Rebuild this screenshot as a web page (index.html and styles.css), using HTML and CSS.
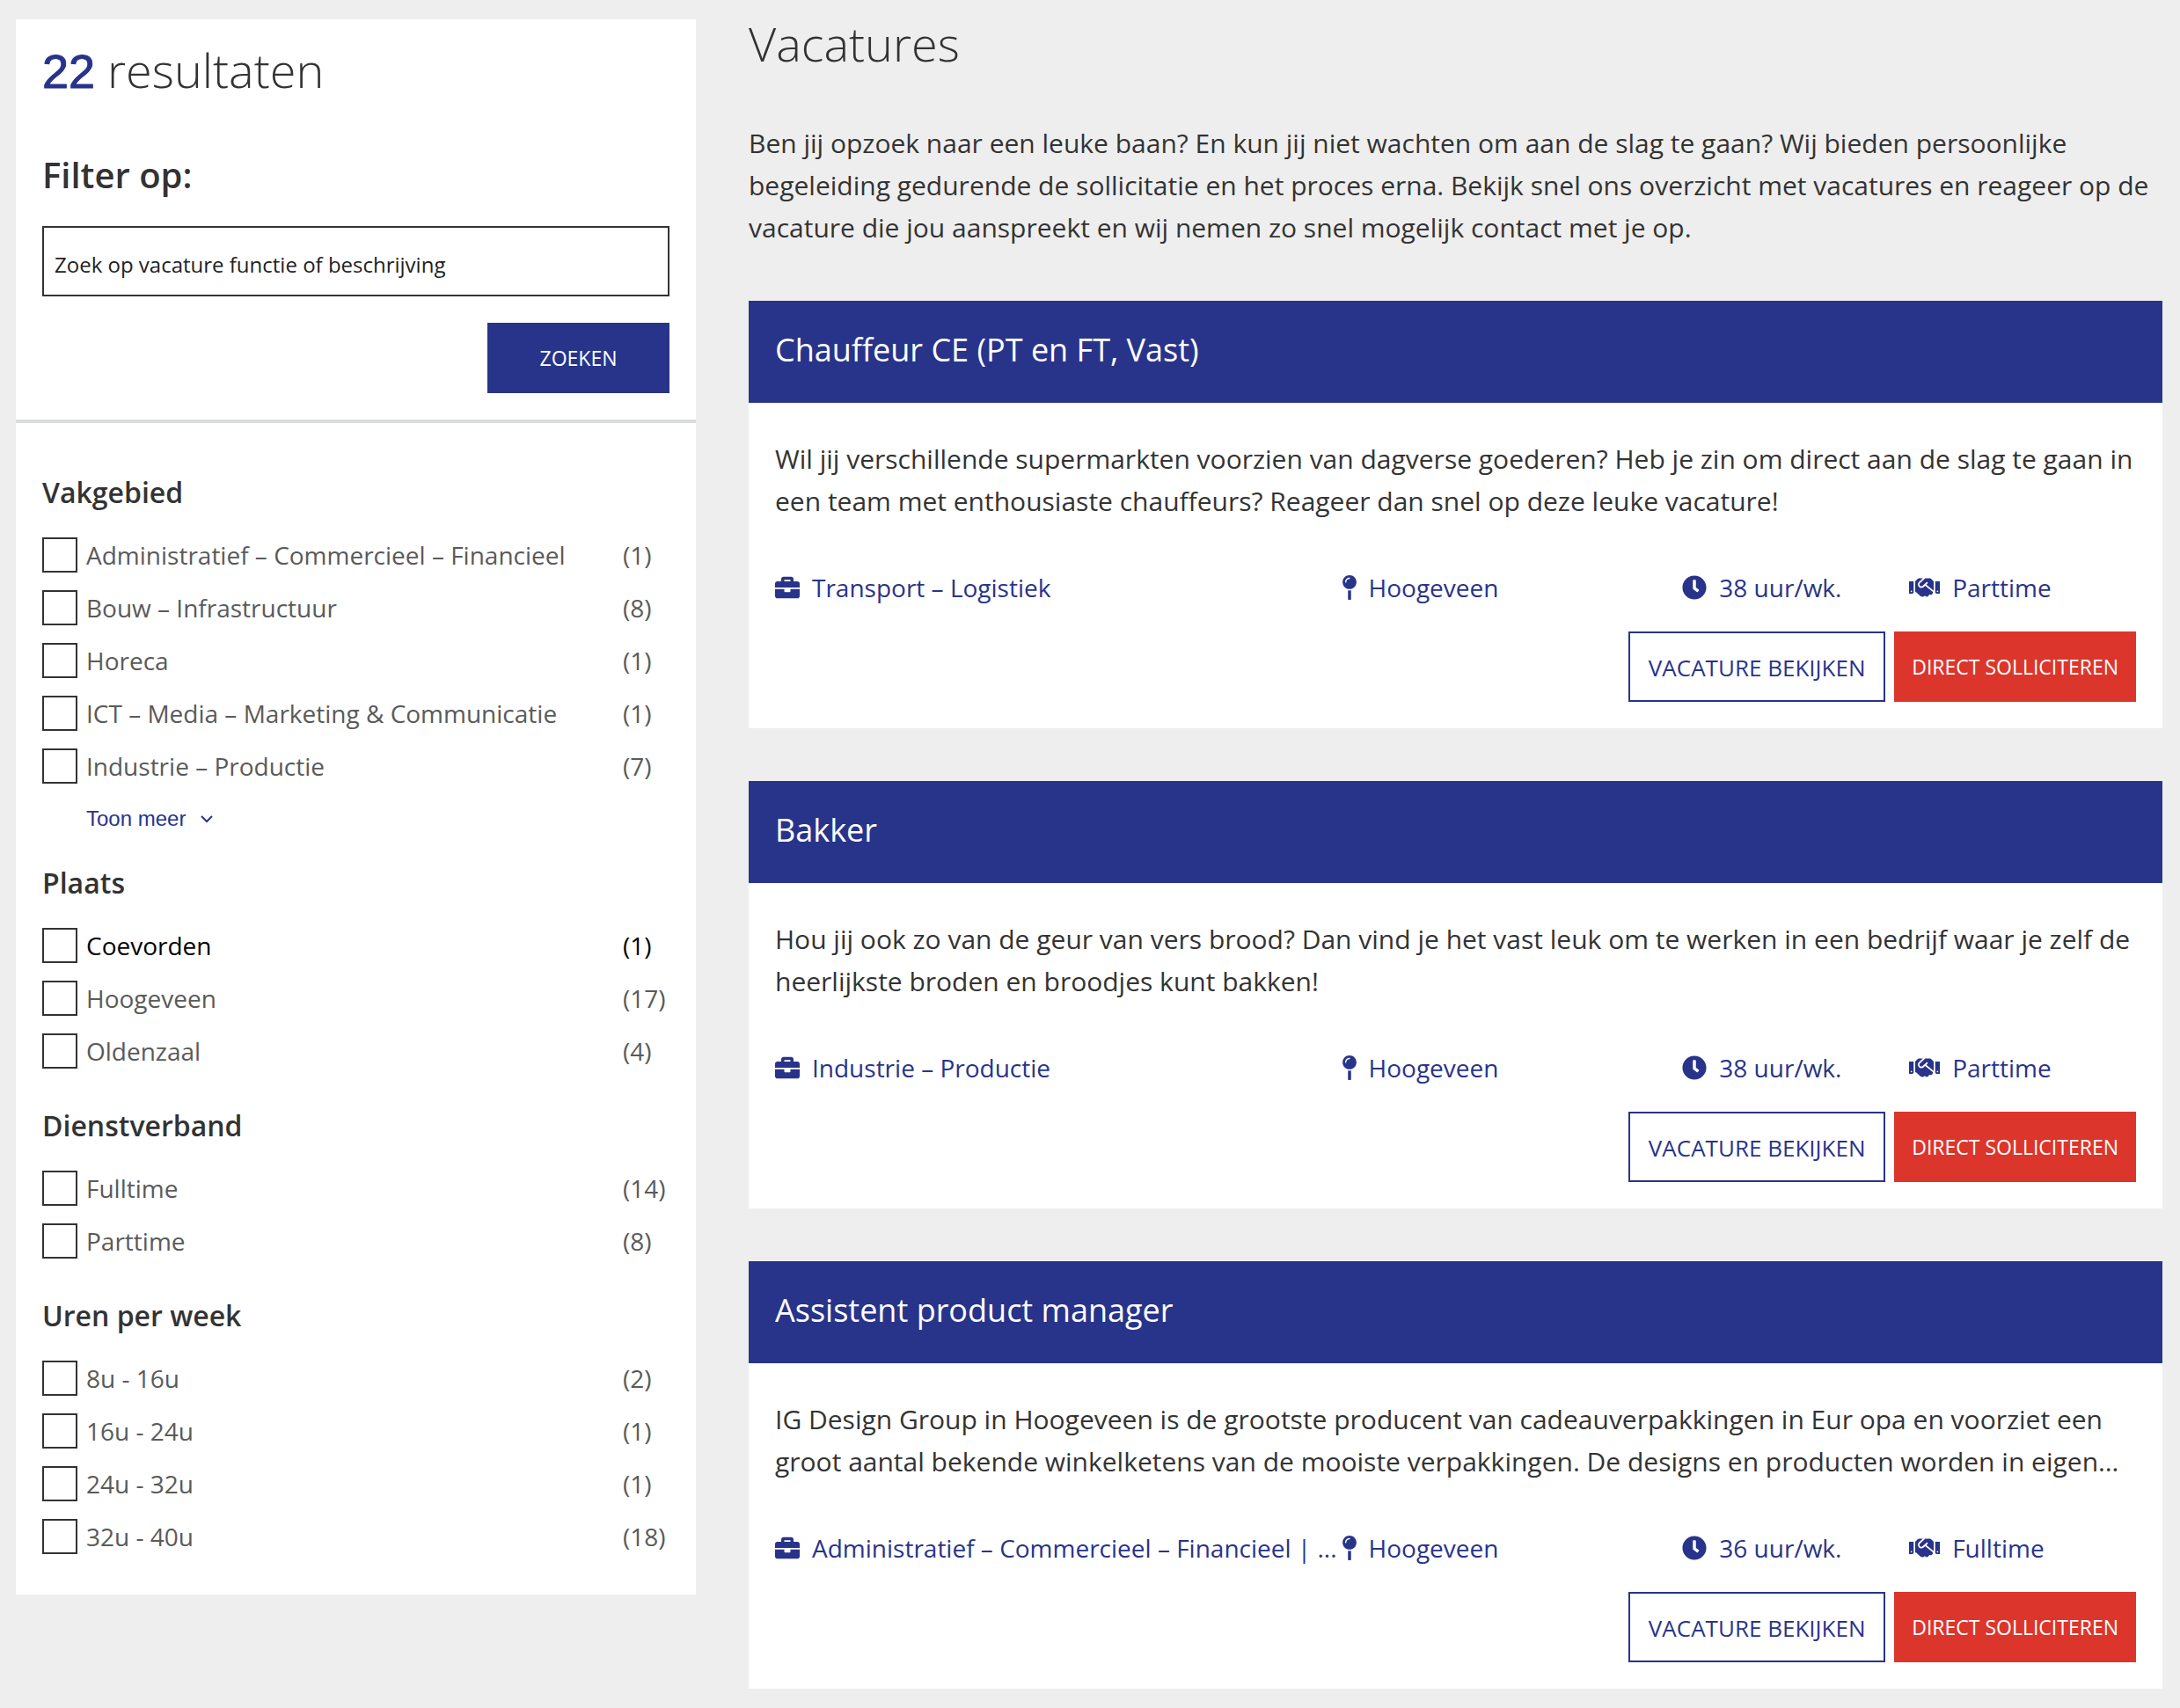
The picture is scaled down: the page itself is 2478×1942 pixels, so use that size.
FILE: index.html
```html
<!DOCTYPE html>
<html lang="nl">
<head>
<meta charset="utf-8">
<meta name="viewport" content="width=device-width, initial-scale=1">
<title>Vacatures</title>
<link rel="stylesheet" href="styles.css">
</head>
<body>
<svg class="sprite" aria-hidden="true">
  <symbol id="i-briefcase" viewBox="0 0 512 512"><path d="M320 336c0 8.84-7.16 16-16 16h-96c-8.84 0-16-7.16-16-16v-48H0v144c0 25.6 22.4 48 48 48h416c25.6 0 48-22.4 48-48V288H320v48zm144-208h-80V80c0-25.6-22.4-48-48-48H176c-25.6 0-48 22.4-48 48v48H48c-25.6 0-48 22.4-48 48v80h512v-80c0-25.6-22.4-48-48-48zm-144 0H192V96h128v32z"/></symbol>
  <symbol id="i-pin" viewBox="0 0 288 512"><path d="M112 316.94V500c0 7 5 12 12 12h40c7 0 12-5 12-12V316.94c-10.39 1.92-21.06 3.06-32 3.06s-21.61-1.14-32-3.06zM144 0C64.47 0 0 64.47 0 144s64.47 144 144 144 144-64.47 144-144S223.53 0 144 0zm0 76c-37.5 0-68 30.5-68 68 0 6.62-5.38 12-12 12s-12-5.38-12-12c0-50.73 41.28-92 92-92 6.62 0 12 5.38 12 12s-5.38 12-12 12z"/></symbol>
  <symbol id="i-clock" viewBox="0 0 512 512"><path d="M256,8C119,8,8,119,8,256S119,504,256,504,504,393,504,256,393,8,256,8Zm92.49,313h0l-20,25a16,16,0,0,1-22.49,2.5h0l-67-49.72a40,40,0,0,1-15-31.23V112a16,16,0,0,1,16-16h32a16,16,0,0,1,16,16V256l58,42.5A16,16,0,0,1,348.49,321Z"/></symbol>
  <symbol id="i-handshake" viewBox="0 0 640 512"><path d="M434.7 64h-85.9c-8 0-15.7 3-21.6 8.4l-98.3 90c-.1.1-.2.3-.3.4-16.6 15.6-16.3 40.5-2.1 56 12.7 13.9 39.4 17.6 56.1 2.7.1-.1.3-.1.4-.2l79.9-73.2c6.5-5.9 16.7-5.5 22.6 1 6 6.5 5.5 16.6-1 22.6l-26.1 23.9L504 313.8c2.9 2.4 5.5 5 7.9 7.7V128l-54.6-54.6c-5.9-6-14.1-9.4-22.6-9.4zM544 128.2v223.9c0 17.7 14.3 32 32 32h64V128.2h-96zm48 223.9c-8.8 0-16-7.2-16-16s7.2-16 16-16 16 7.2 16 16-7.2 16-16 16zM0 384h64c17.7 0 32-14.3 32-32V128.2H0V384zm48-63.9c8.8 0 16 7.2 16 16s-7.2 16-16 16-16-7.2-16-16c0-8.9 7.2-16 16-16zm435.9 18.6L334.6 217.5l-30 27.5c-29.7 27.1-75.2 24.5-101.7-4.4-26.9-29.4-24.8-74.9 4.4-101.7L289.1 64h-83.8c-8.5 0-16.6 3.4-22.6 9.4L128 128v223.9h18.3l90.5 81.9c27.4 22.3 67.7 18.1 90-9.3l.2-.2 17.9 15.5c15.9 13 39.4 10.5 52.3-5.4l31.4-38.6 5.4 4.4c13.7 11.1 33.9 9.1 45-4.7l9.5-11.7c11.2-13.8 9.1-33.9-4.6-45.1z"/></symbol>
</svg>
<div class="page">
  <aside class="sidebar">
    <form class="search">
      <h2 class="results"><strong>22</strong> resultaten</h2>
      <h3 class="filter-title">Filter op:</h3>
      <input class="search-input" type="text" placeholder="Zoek op vacature functie of beschrijving" aria-label="Zoek op vacature functie of beschrijving">
      <button class="btn btn-search" type="submit">Zoeken</button>
    </form>
    <div class="filters">
      <fieldset class="group">
        <legend>Vakgebied</legend>
        <label class="option"><input type="checkbox"><span>Administratief – Commercieel – Financieel</span><span class="count">(1)</span></label>
        <label class="option"><input type="checkbox"><span>Bouw – Infrastructuur</span><span class="count">(8)</span></label>
        <label class="option"><input type="checkbox"><span>Horeca</span><span class="count">(1)</span></label>
        <label class="option"><input type="checkbox"><span>ICT – Media – Marketing &amp; Communicatie</span><span class="count">(1)</span></label>
        <label class="option"><input type="checkbox"><span>Industrie – Productie</span><span class="count">(7)</span></label>
        <button class="more" type="button">Toon meer <svg viewBox="0 0 16 10" aria-hidden="true"><path d="M2 2l6 6 6-6"/></svg></button>
      </fieldset>
      <fieldset class="group">
        <legend>Plaats</legend>
        <label class="option option-active"><input type="checkbox"><span>Coevorden</span><span class="count">(1)</span></label>
        <label class="option"><input type="checkbox"><span>Hoogeveen</span><span class="count">(17)</span></label>
        <label class="option"><input type="checkbox"><span>Oldenzaal</span><span class="count">(4)</span></label>
      </fieldset>
      <fieldset class="group">
        <legend>Dienstverband</legend>
        <label class="option"><input type="checkbox"><span>Fulltime</span><span class="count">(14)</span></label>
        <label class="option"><input type="checkbox"><span>Parttime</span><span class="count">(8)</span></label>
      </fieldset>
      <fieldset class="group">
        <legend>Uren per week</legend>
        <label class="option"><input type="checkbox"><span>8u - 16u</span><span class="count">(2)</span></label>
        <label class="option"><input type="checkbox"><span>16u - 24u</span><span class="count">(1)</span></label>
        <label class="option"><input type="checkbox"><span>24u - 32u</span><span class="count">(1)</span></label>
        <label class="option"><input type="checkbox"><span>32u - 40u</span><span class="count">(18)</span></label>
      </fieldset>
    </div>
  </aside>
  <main class="main">
    <h1 class="title">Vacatures</h1>
    <p class="intro">Ben jij opzoek naar een leuke baan? En kun jij niet wachten om aan de slag te gaan? Wij bieden persoonlijke begeleiding gedurende de sollicitatie en het proces erna. Bekijk snel ons overzicht met vacatures en reageer op de vacature die jou aanspreekt en wij nemen zo snel mogelijk contact met je op.</p>
    <div class="cards">
      <article class="card">
        <h2 class="card-title">Chauffeur CE (PT en FT, Vast)</h2>
        <div class="card-body">
          <p class="desc">Wil jij verschillende supermarkten voorzien van dagverse goederen? Heb je zin om direct aan de slag te gaan in een team met enthousiaste chauffeurs? Reageer dan snel op deze leuke vacature!</p>
          <ul class="meta">
            <li><svg class="icon" aria-hidden="true"><use href="#i-briefcase"/></svg><span>Transport – Logistiek</span></li>
            <li><svg class="icon icon-pin" aria-hidden="true"><use href="#i-pin"/></svg><span>Hoogeveen</span></li>
            <li><svg class="icon" aria-hidden="true"><use href="#i-clock"/></svg><span>38 uur/wk.</span></li>
            <li><svg class="icon icon-wide" aria-hidden="true"><use href="#i-handshake"/></svg><span>Parttime</span></li>
          </ul>
          <div class="actions"><a class="btn btn-view" href="#">Vacature bekijken</a><a class="btn btn-apply" href="#">Direct solliciteren</a></div>
        </div>
      </article>
      <article class="card">
        <h2 class="card-title">Bakker</h2>
        <div class="card-body">
          <p class="desc">Hou jij ook zo van de geur van vers brood? Dan vind je het vast leuk om te werken in een bedrijf waar je zelf de heerlijkste broden en broodjes kunt bakken!</p>
          <ul class="meta">
            <li><svg class="icon" aria-hidden="true"><use href="#i-briefcase"/></svg><span>Industrie – Productie</span></li>
            <li><svg class="icon icon-pin" aria-hidden="true"><use href="#i-pin"/></svg><span>Hoogeveen</span></li>
            <li><svg class="icon" aria-hidden="true"><use href="#i-clock"/></svg><span>38 uur/wk.</span></li>
            <li><svg class="icon icon-wide" aria-hidden="true"><use href="#i-handshake"/></svg><span>Parttime</span></li>
          </ul>
          <div class="actions"><a class="btn btn-view" href="#">Vacature bekijken</a><a class="btn btn-apply" href="#">Direct solliciteren</a></div>
        </div>
      </article>
      <article class="card">
        <h2 class="card-title">Assistent product manager</h2>
        <div class="card-body">
          <p class="desc">IG Design Group in Hoogeveen is de grootste producent van cadeauverpakkingen in Eur opa en voorziet een groot aantal bekende winkelketens van de mooiste verpakkingen. De designs en producten worden in eigen…</p>
          <ul class="meta">
            <li><svg class="icon" aria-hidden="true"><use href="#i-briefcase"/></svg><span>Administratief – Commercieel – Financieel | ...</span></li>
            <li><svg class="icon icon-pin" aria-hidden="true"><use href="#i-pin"/></svg><span>Hoogeveen</span></li>
            <li><svg class="icon" aria-hidden="true"><use href="#i-clock"/></svg><span>36 uur/wk.</span></li>
            <li><svg class="icon icon-wide" aria-hidden="true"><use href="#i-handshake"/></svg><span>Fulltime</span></li>
          </ul>
          <div class="actions"><a class="btn btn-view" href="#">Vacature bekijken</a><a class="btn btn-apply" href="#">Direct solliciteren</a></div>
        </div>
      </article>
    </div>
  </main>
</div>
</body>
</html>
```
FILE: styles.css
```css
:root {
  --blue: #28348a;
  --red: #dc362c;
  --text: #333;
  --muted: #5a5a5a;
  --page: #eee;
}

*,
*::before,
*::after {
  box-sizing: border-box;
}

body,
h1,
h2,
h3,
p,
ul,
fieldset,
legend {
  margin: 0;
  padding: 0;
}

body {
  background: var(--page);
  color: var(--text);
  font-family: "Open Sans", sans-serif;
  font-size: 28px;
  line-height: 48px;
}

.sprite {
  display: none;
}

.page {
  display: grid;
  grid-template-columns: 773fr 1607fr;
  gap: 60px;
  align-items: start;
  padding: 22px 20px 22px 18px;
}

.sidebar {
  background: #fff;
}

.search {
  display: flex;
  flex-direction: column;
  padding: 17px 30px 30px;
  border-bottom: 4px solid #d8dbdb;
}

.results,
.title {
  font-size: 54px;
  font-weight: 300;
  line-height: 80px;
}

.results strong {
  color: var(--blue);
  font-family: "Liberation Sans", sans-serif;
  font-weight: 400;
  -webkit-text-stroke: 1px var(--blue);
}

.filter-title {
  margin: 48px 0 28px;
  font-size: 40px;
  font-weight: 600;
  line-height: 60px;
}

.search-input {
  width: 100%;
  height: 80px;
  padding: 6px 12px 0;
  border: 2px solid var(--text);
  border-radius: 0;
  background: #fff;
  color: var(--text);
  font: 24px "Open Sans", sans-serif;
}

.search-input::placeholder {
  color: #222;
  opacity: 1;
}

.btn {
  display: flex;
  align-items: center;
  justify-content: center;
  height: 80px;
  padding: 0 20px;
  border: 0;
  font-family: "Open Sans", sans-serif;
  font-size: 23px;
  font-weight: 500;
  line-height: 40px;
  text-decoration: none;
  text-transform: uppercase;
}

.btn-search {
  align-self: flex-end;
  min-width: 207px;
  margin-top: 30px;
  background: var(--blue);
  color: #fff;
}

.filters {
  display: grid;
  gap: 30px;
  padding: 54px 30px 36px;
}

.group {
  min-width: 0;
  border: 0;
}

.group legend {
  margin-bottom: 16px;
  font-size: 32px;
  font-weight: 600;
  line-height: 50px;
}

.option {
  display: grid;
  grid-template-columns: 40px 1fr 53px;
  align-items: center;
  column-gap: 10px;
  height: 60px;
  color: var(--muted);
}

.option-active {
  color: #000;
}

.option input {
  width: 40px;
  height: 40px;
  margin: 0;
  border: 2px solid var(--text);
  appearance: none;
  background: #fff;
}

.count {
  white-space: nowrap;
}

.more {
  display: flex;
  align-items: center;
  gap: 16px;
  height: 48px;
  padding: 12px 0 0 50px;
  border: 0;
  background: none;
  color: var(--blue);
  font: 24px "Liberation Sans", sans-serif;
}

.more svg {
  width: 16px;
  height: 10px;
  fill: none;
  stroke: currentColor;
  stroke-width: 2;
}

.title {
  line-height: 54px;
}

.intro {
  margin: 63px 0 59px;
  font-size: 30px;
}

.cards {
  display: grid;
  gap: 60px;
}

.card {
  background: #fff;
}

.card-title {
  padding: 26px 30px 30px;
  background: var(--blue);
  color: #fff;
  font-size: 36px;
  font-weight: 500;
  line-height: 60px;
}

.card-body {
  padding: 40px 30px 30px;
}

.desc {
  font-size: 30px;
}

.meta {
  display: grid;
  grid-template-columns: 5fr 3fr 2fr 2fr;
  margin: 50px 0 26px;
  color: var(--blue);
  list-style: none;
}

.meta li {
  display: flex;
  align-items: center;
  gap: 14px;
  min-width: 0;
  white-space: nowrap;
}

.icon {
  flex: none;
  width: 28px;
  height: 28px;
  fill: currentColor;
}

.icon-pin {
  width: 16px;
}

.icon-wide {
  width: 35px;
}

.actions {
  display: flex;
  justify-content: flex-end;
  gap: 10px;
}

.btn-view {
  min-width: 292px;
  padding-top: 2px;
  border: 2px solid var(--blue);
  color: var(--blue);
  font-size: 26px;
  font-weight: 400;
}

.btn-apply {
  min-width: 274px;
  background: var(--red);
  color: #fff;
}
```
